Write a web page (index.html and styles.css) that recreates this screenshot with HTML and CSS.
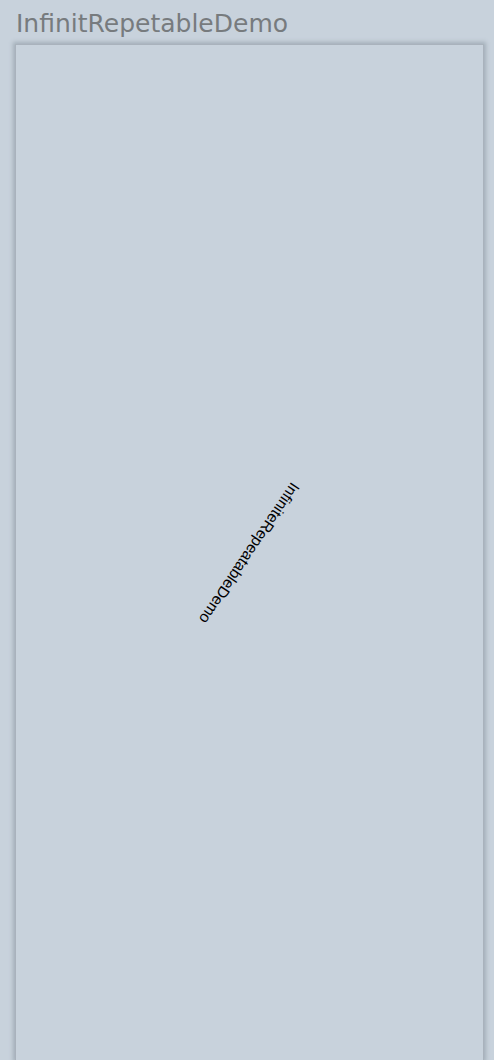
FILE: index.html
```html
<!DOCTYPE html>
<html>
<head>
<meta charset="utf-8">
<link rel="stylesheet" href="styles.css">
</head>
<body>
<div class="page">
  <h1 class="title">InfinitRepetableDemo</h1>
  <div class="panel">
    <span class="spin">InfiniteRepeatableDemo</span>
  </div>
</div>
</body>
</html>
```
FILE: styles.css
```css
html, body {
  margin: 0;
  padding: 0;
  background: #c8d2dc;
}
.page {
  display: flex;
  flex-direction: column;
  height: 1060px;
  padding: 0 10px 0 15px;
  box-sizing: border-box;
}
.title {
  margin: 0;
  padding: 12px 0 0 1px;
  height: 36px;
  box-sizing: border-box;
  font-family: "DejaVu Sans", "Open Sans", sans-serif;
  font-weight: 400;
  font-size: 25px;
  line-height: 24px;
  color: #777b7e;
  letter-spacing: 0;
}
.panel {
  flex: 1;
  margin-top: 8px;
  border: 1px solid #a9b2bc;
  border-bottom: 0;
  background: #c8d2dc;
  box-shadow: 0 0 4px 2px rgba(120, 132, 145, 0.45);
  display: flex;
  align-items: center;
  justify-content: center;
}
.spin {
  font-family: "Liberation Sans", Arial, sans-serif;
  font-size: 15.5px;
  color: #000;
  transform: rotate(124deg);
  white-space: nowrap;
}
```
